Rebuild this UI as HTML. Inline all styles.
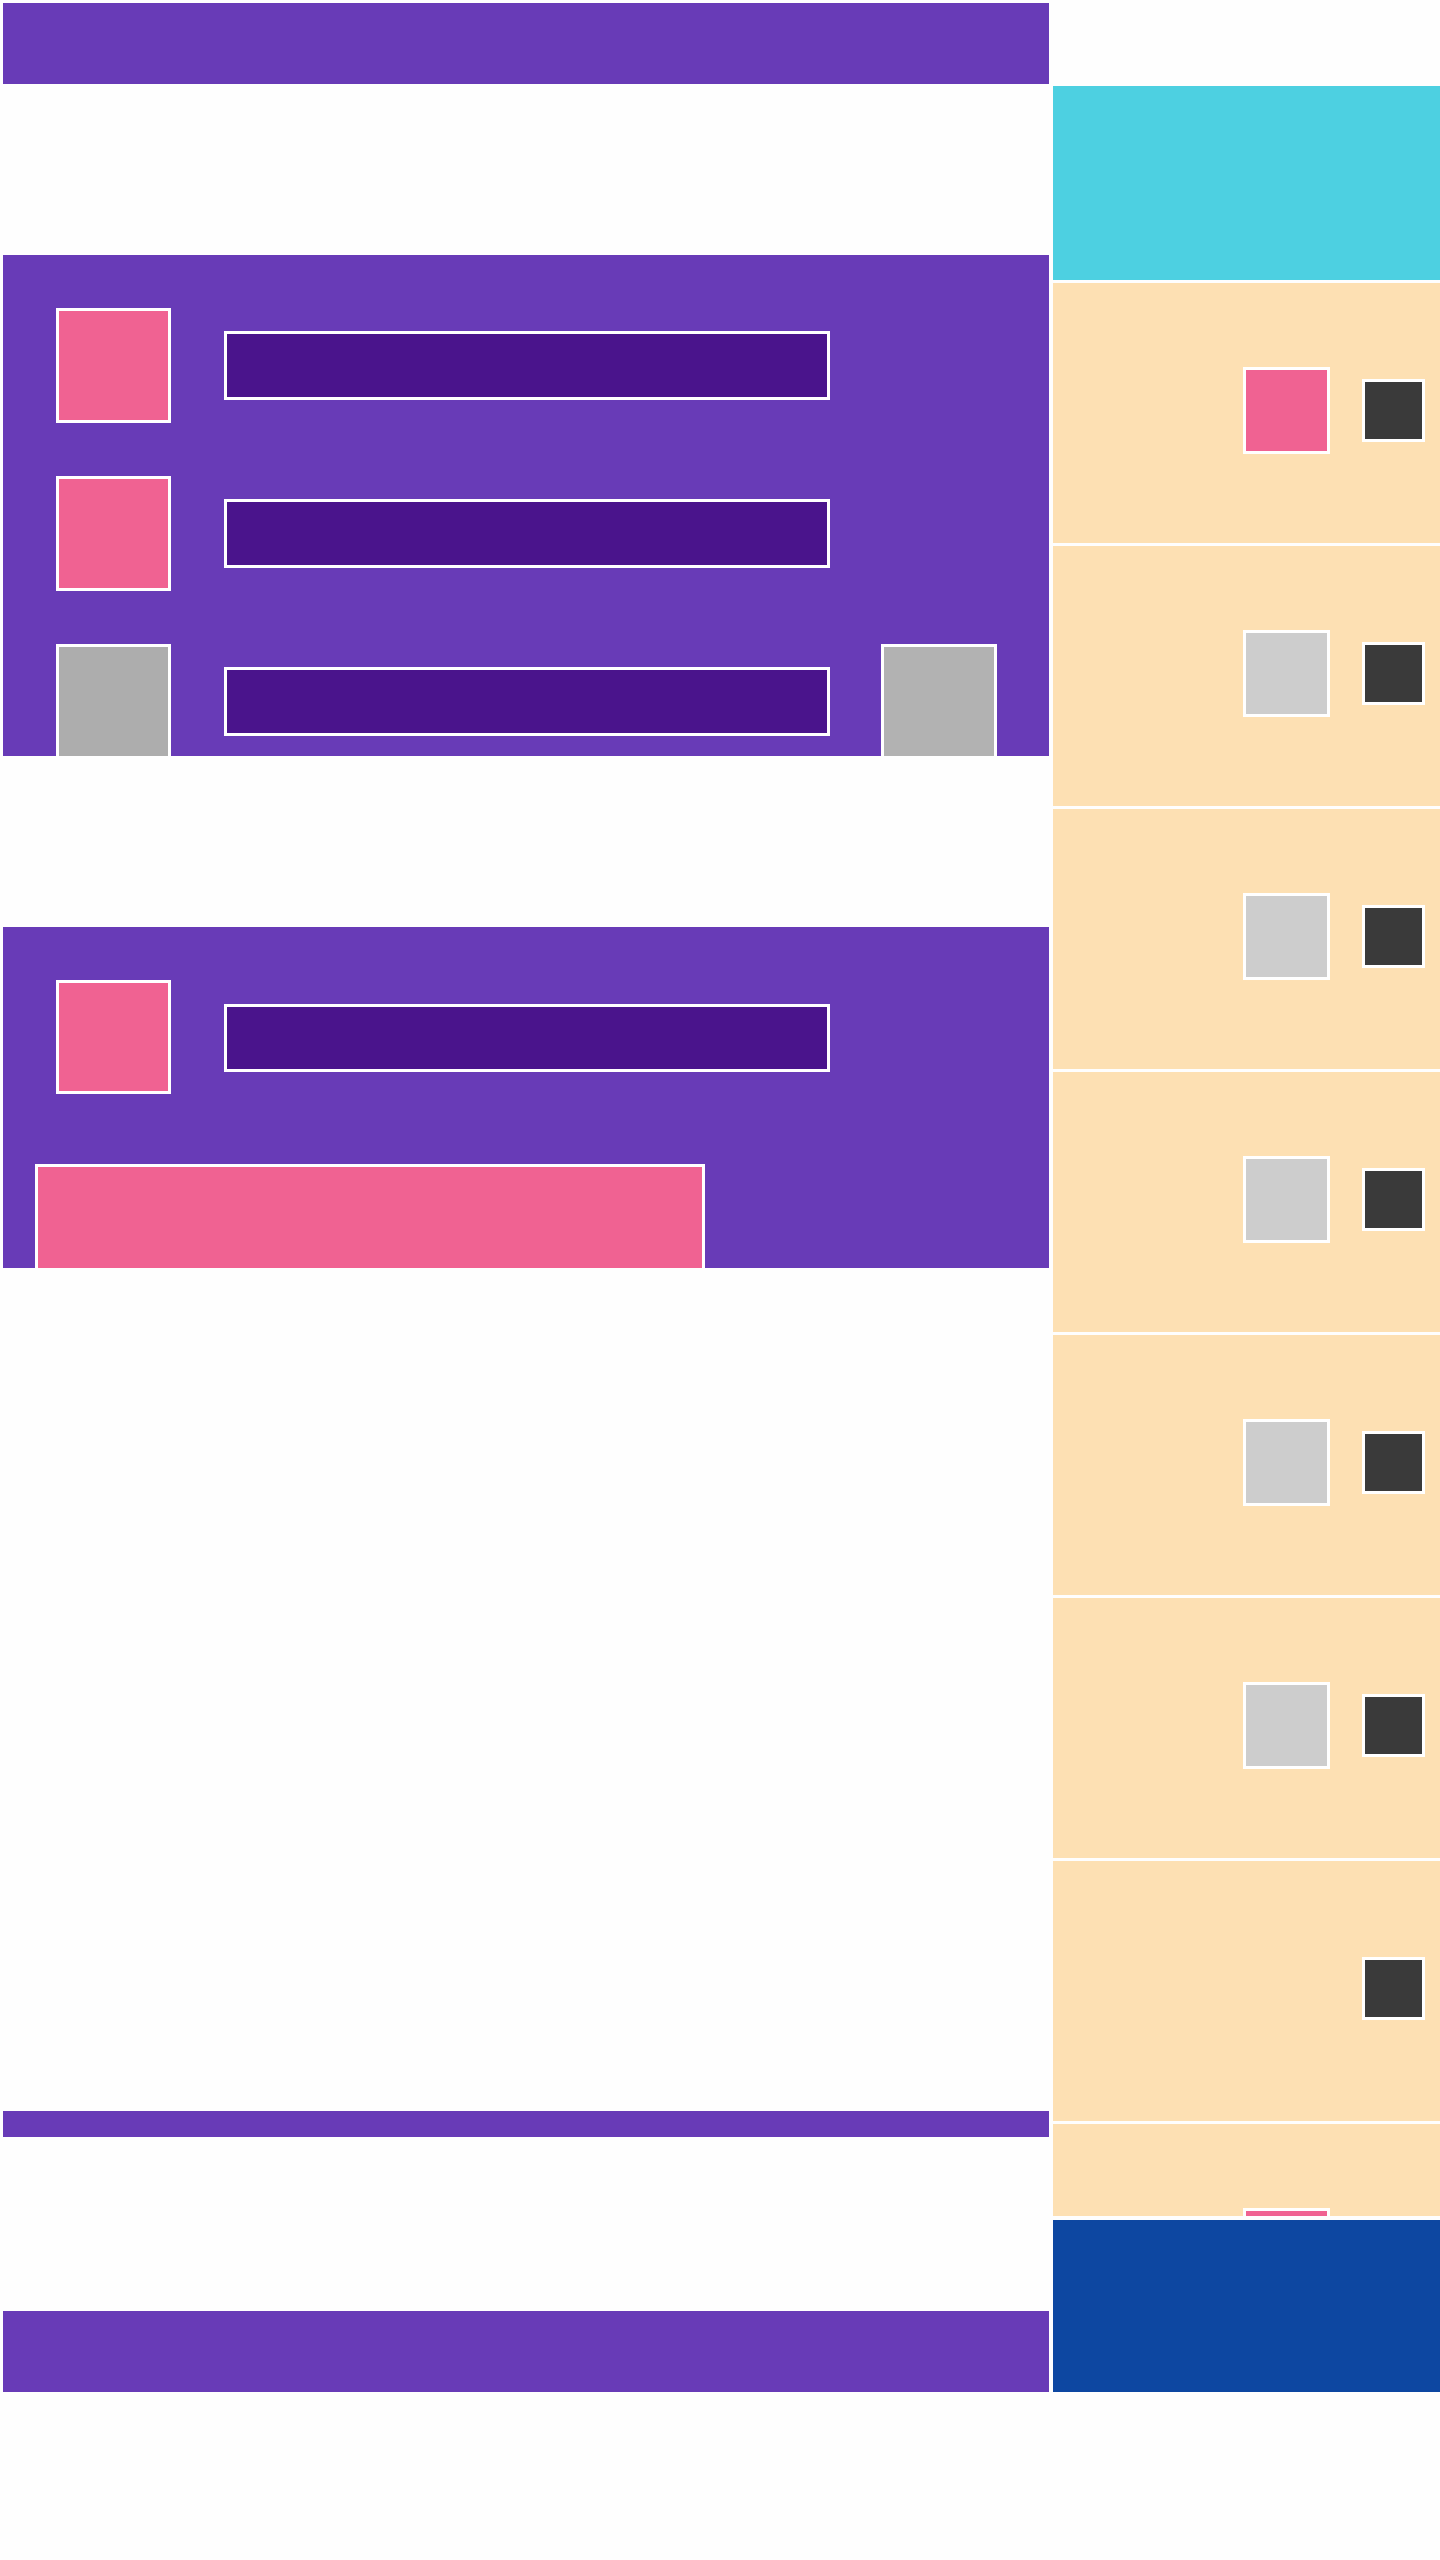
<!DOCTYPE html>
<html><head><style>
html,body{margin:0;padding:0;background:#fefefe;}
body{width:1440px;height:2560px;position:relative;overflow:hidden;font-family:"Liberation Sans",sans-serif;}
div{position:absolute;box-sizing:border-box;}
.p{background:#683bb7;}
.sq{border:3px solid #fff;}
.pk{background:#f06292;}
.bar{background:#4a148c;border:3px solid #fff;}
.cell{left:1053px;width:387px;height:260px;background:#fde0b3;overflow:hidden;}
.cell .a{left:190px;top:84px;width:87px;height:87px;border:3px solid #fff;}
.cell .b{left:309px;top:96px;width:63px;height:63px;border:3px solid #fff;background:#3a3a3a;}
.g{background:#cdcdcd;}
</style></head><body>
<div class="p" style="left:3px;top:3px;width:1046px;height:81px"></div>
<div style="left:1053px;top:86px;width:387px;height:194px;background:#4dd0e1"></div>

<div class="p" style="left:3px;top:255px;width:1046px;height:501px;overflow:hidden">
  <div class="sq pk" style="left:53px;top:53px;width:115px;height:115px"></div>
  <div class="bar" style="left:221px;top:76px;width:606px;height:69px"></div>
  <div class="sq pk" style="left:53px;top:221px;width:115px;height:115px"></div>
  <div class="bar" style="left:221px;top:244px;width:606px;height:69px"></div>
  <div class="sq" style="left:53px;top:389px;width:115px;height:115px;background:#adadad"></div>
  <div class="bar" style="left:221px;top:412px;width:606px;height:69px"></div>
  <div class="sq" style="left:878px;top:389px;width:116px;height:115px;background:#b2b2b2"></div>
</div>

<div class="p" style="left:3px;top:927px;width:1046px;height:341px;overflow:hidden">
  <div class="sq pk" style="left:53px;top:53px;width:115px;height:114px"></div>
  <div class="bar" style="left:221px;top:77px;width:606px;height:68px"></div>
  <div class="sq pk" style="left:32px;top:237px;width:670px;height:120px"></div>
</div>

<div class="cell" style="top:283px"><div class="a pk"></div><div class="b"></div></div>
<div class="cell" style="top:546px"><div class="a g"></div><div class="b"></div></div>
<div class="cell" style="top:809px"><div class="a g"></div><div class="b"></div></div>
<div class="cell" style="top:1072px"><div class="a g"></div><div class="b"></div></div>
<div class="cell" style="top:1335px"><div class="a g"></div><div class="b"></div></div>
<div class="cell" style="top:1598px"><div class="a g"></div><div class="b"></div></div>
<div class="cell" style="top:1861px"><div class="b"></div></div>
<div class="cell" style="top:2124px;height:92px"><div class="a pk"></div></div>

<div class="p" style="left:3px;top:2111px;width:1046px;height:26px"></div>
<div class="p" style="left:3px;top:2311px;width:1046px;height:81px"></div>
<div style="left:1053px;top:2220px;width:387px;height:172px;background:#0d47a1"></div>
</body></html>
